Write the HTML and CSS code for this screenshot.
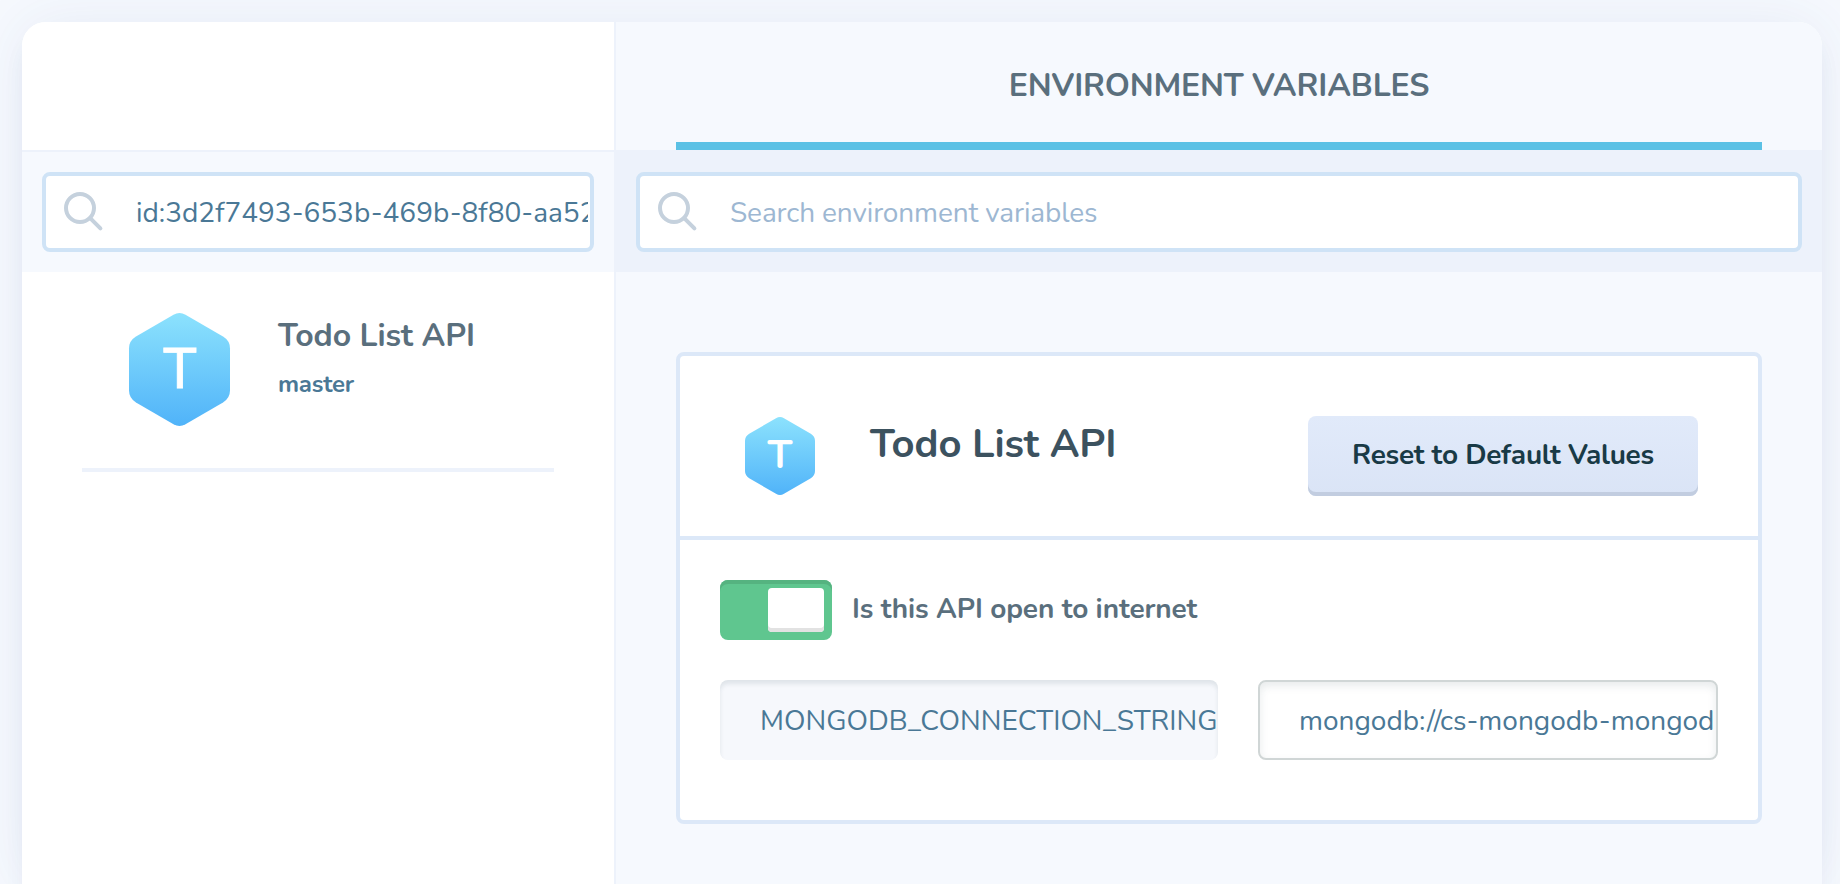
FILE: index.html
```
<!DOCTYPE html>
<html lang="en">
<head>
<meta charset="utf-8">
<title>Environment Variables</title>
<link rel="stylesheet" href="styles.css">
</head>
<body>
<div class="panel">
  <aside class="sidebar">
    <div class="sidebar-head"></div>
    <div class="search search-side">
      <label class="search-box">
        <svg class="search-icon" viewBox="0 0 40 40"><circle cx="16" cy="16" r="14"/><path d="M26.2 26.2 36.4 36.4"/></svg>
        <input class="search-input" type="text" value="id:3d2f7493-653b-469b-8f80-aa52c1e7">
      </label>
    </div>
    <div class="service">
      <svg class="hex hex-large" viewBox="0 0 101 113">
        <defs><linearGradient id="hex-fill" x1="0" y1="0" x2="0" y2="1"><stop offset="0" stop-color="#8ce2fd"/><stop offset="1" stop-color="#50b3f9"/></linearGradient></defs>
        <path fill="url(#hex-fill)" d="M44.5 1.8Q50.5-1.6 56.5 1.8L94 23.6Q101 27.8 101 35.500V77.500Q101 85.200 94 89.400L56.500 111.200Q50.500 114.600 44.500 111.200L7 89.400Q0 85.200 0 77.500V35.500Q0 27.800 7 23.600Z"/>
        <text class="hex-letter-large" x="51" y="74.500" text-anchor="middle">T</text>
      </svg>
      <div class="service-text">
        <div class="service-name">Todo List API</div>
        <div class="service-branch">master</div>
      </div>
    </div>
  </aside>
  <main class="content">
    <header class="tabs"><div class="tab">ENVIRONMENT VARIABLES</div></header>
    <div class="search search-main">
      <label class="search-box">
        <svg class="search-icon" viewBox="0 0 40 40"><circle cx="16" cy="16" r="14"/><path d="M26.2 26.2 36.4 36.4"/></svg>
        <input class="search-input" type="text" placeholder="Search environment variables">
      </label>
    </div>
    <section class="card">
      <div class="card-head">
        <svg class="hex hex-small" viewBox="0 0 70 78">
          <path fill="url(#hex-fill)" d="M31 1.200Q35-1.200 39 1.200L65.800 16.800Q70 19.400 70 24V54Q70 58.600 65.800 61.200L39 76.800Q35 79.200 31 76.800L4.200 61.200Q0 58.600 0 54V24Q0 19.400 4.200 16.800Z"/>
          <text class="hex-letter-small" x="35" y="50.500" text-anchor="middle">T</text>
        </svg>
        <h2 class="card-title">Todo List API</h2>
        <button class="reset" type="button">Reset to Default Values</button>
      </div>
      <div class="card-body">
        <div class="toggle-row">
          <span class="toggle"><span class="knob"></span></span>
          <span class="toggle-label">Is this API open to internet</span>
        </div>
        <div class="variable">
          <input class="field field-key" type="text" value="MONGODB_CONNECTION_STRING" readonly>
          <input class="field field-value" type="text" value="mongodb://cs-mongodb-mongodb">
        </div>
      </div>
    </section>
  </main>
</div>
</body>
</html>
```
FILE: styles.css
```
* { box-sizing: border-box; }
body {
  margin: 0;
  height: 884px;
  overflow: hidden;
  padding: 22px 18px 0 22px;
  background: #f6f9fe;
  font-family: Nunito, Lato, sans-serif;
  color: #5a6f7d;
}
.panel {
  display: flex;
  height: 862px;
  border-radius: 24px 24px 0 0;
  overflow: hidden;
  background: #fff;
  box-shadow: 0 0 60px rgba(50, 80, 140, .08), 0 20px 20px rgba(60, 80, 140, .05);
}
.sidebar { width: 594px; border-right: 2px solid #edf2fb; background: #fff; }
.sidebar-head { height: 130px; border-bottom: 2px solid #edf2fb; }
.search { padding: 20px; }
.search-side { height: 120px; background: #f6f9fe; }
.search-main { height: 122px; padding-top: 22px; background: #edf2fb; }
.search-box {
  display: flex;
  align-items: center;
  height: 80px;
  padding: 0 2px 0 18px;
  border: 4px solid #cfe3f6;
  border-radius: 8px;
  background: #fff;
}
.search-icon {
  flex: none;
  width: 40px;
  height: 40px;
  margin-right: 32px;
  fill: none;
  stroke: #c5d1dd;
  stroke-width: 4;
  stroke-linecap: round;
}
.search-input {
  flex: 1;
  min-width: 0;
  height: 72px;
  padding: 2px 0 0;
  border: 0;
  outline: 0;
  background: transparent;
  font: 400 28px Nunito, Lato, sans-serif;
  color: #4a7896;
}
.search-input::placeholder { color: #9db7d2; opacity: 1; letter-spacing: -.12px; }
.service {
  display: flex;
  margin: 0 60px;
  height: 200px;
  padding: 41px 0 0 47px;
  border-bottom: 4px solid #edf2fb;
}
.hex { flex: none; overflow: visible; }
.hex-large { width: 101px; height: 113px; margin-right: 48px; }
.hex-small { width: 70px; height: 78px; margin: 1px 55px 0 0; }
.hex text { fill: #fff; }
.hex-letter-large { font: 400 57px "Liberation Sans", sans-serif; stroke: #fff; stroke-width: .8; }
.hex-letter-small { font: 700 40px Nunito, Lato, sans-serif; }
.service-text { padding-top: 1px; }
.service-name { font-size: 32px; font-weight: 700; line-height: 44px; letter-spacing: -.12px; }
.service-branch { margin-top: 9px; font-size: 24px; font-weight: 700; line-height: 34px; letter-spacing: -.2px; color: #4a7896; }
.content { flex: 1; background: #f6f9fe; }
.tabs { height: 128px; padding: 0 60px; }
.tab {
  height: 128px;
  border-bottom: 8px solid #5bc1e5;
  padding-top: 6px;
  font-size: 32px;
  font-weight: 700;
  line-height: 116px;
  letter-spacing: -.15px;
  text-align: center;
}
.card { height: 472px; margin: 80px 60px 0; border: 4px solid #dce8f8; border-radius: 8px; background: #fff; }
.card-head { display: flex; height: 184px; padding: 60px 60px 0 65px; border-bottom: 4px solid #dce8f8; }
.card-title { flex: 1; margin: 0; font-size: 40px; font-weight: 700; line-height: 56px; letter-spacing: -.12px; color: #3c525f; }
.reset {
  width: 390px;
  height: 80px;
  padding: 0 0 2px;
  border: 0;
  border-radius: 8px;
  background: linear-gradient(#e1eafa, #dae4f6);
  box-shadow: inset 0 -4px #c2cde0;
  font: 700 28px Nunito, Lato, sans-serif;
  letter-spacing: -.27px;
  color: #193a46;
}
.card-body { padding: 40px; }
.toggle-row { display: flex; }
.toggle {
  display: flex;
  justify-content: flex-end;
  width: 112px;
  height: 60px;
  padding: 8px;
  border-radius: 8px;
  background: #5fc68f;
  box-shadow: inset 0 4px #55b380;
}
.knob { width: 56px; height: 44px; border-radius: 4px; background: #fff; box-shadow: inset 0 -4px #e2e2e2; }
.toggle-label { margin-left: 20px; font-size: 28px; font-weight: 700; line-height: 58px; letter-spacing: -.12px; }
.variable { display: flex; gap: 40px; margin-top: 40px; }
.field {
  height: 80px;
  border: 2px solid;
  border-radius: 8px;
  padding: 1px 0 0 39px;
  outline: 0;
  font: 400 28px Nunito, Lato, sans-serif;
  color: #4a7896;
}
.field-key { width: 498px; border: 0; padding-left: 40px; background: #f6f8fc; box-shadow: inset 0 4px 4px rgba(25, 58, 70, .1); }
.field-value { width: 460px; padding-right: 2px; border-color: #d0d6d6; background: #fff; box-shadow: inset 0 4px 8px rgba(25, 58, 70, .1); }
```
